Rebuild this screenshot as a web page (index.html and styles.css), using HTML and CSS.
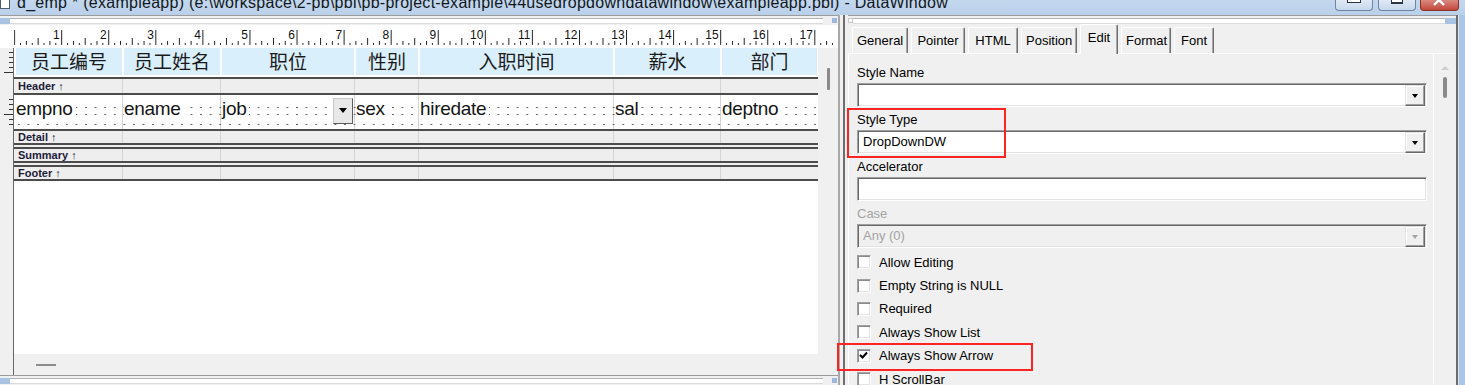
FILE: index.html
```html
<!DOCTYPE html>
<html>
  <head>
    <meta charset="utf-8">
    <link rel="stylesheet" href="styles.css">
  </head>
  <body>
    <div class="window">
      <div class="titlebar">
        <span class="app-icon"></span>
        <span class="title">d_emp * (exampleapp) (e:\workspace\2-pb\pbl\pb-project-example\44usedropdowndatawindow\exampleapp.pbl) - DataWindow</span>
        <div class="wincontrols">
          <span class="wbtn min"><i></i></span>
          <span class="wbtn max"><i></i></span>
          <span class="wbtn close">
            <svg width="14" height="10" viewBox="0 0 14 10"><path d="M1 -5L11 5M11 -5L1 5" stroke="#fff" stroke-width="2.4" fill="none"/></svg>
          </span>
        </div>
      </div>

      <div class="frame">
        <!-- datawindow painter -->
        <div class="dw-pane">
          <div class="strip"><span class="nub"></span><span class="track"></span><span class="corner"></span></div>

          <svg class="ruler" width="838" height="23" viewBox="0 0 838 23">
            <defs>
              <pattern id="ticks" x="13" y="0" width="47.2" height="23" patternUnits="userSpaceOnUse">
                <rect x="0" y="5" width="1" height="15" fill="#222"/>
                <rect x="23.6" y="13" width="1" height="7" fill="#222"/>
                <rect x="11.8" y="16" width="1" height="4" fill="#222"/>
                <rect x="35.4" y="16" width="1" height="4" fill="#222"/>
                <rect x="5.9" y="18" width="1" height="2" fill="#222"/>
                <rect x="17.7" y="18" width="1" height="2" fill="#222"/>
                <rect x="29.5" y="18" width="1" height="2" fill="#222"/>
                <rect x="41.3" y="18" width="1" height="2" fill="#222"/>
              </pattern>
            </defs>
            <rect x="13" y="0" width="825" height="23" fill="url(#ticks)"/>
            <text x="58.7" y="14">1</text>
            <text x="105.9" y="14">2</text>
            <text x="153.1" y="14">3</text>
            <text x="200.3" y="14">4</text>
            <text x="247.5" y="14">5</text>
            <text x="294.7" y="14">6</text>
            <text x="341.9" y="14">7</text>
            <text x="389.1" y="14">8</text>
            <text x="436.3" y="14">9</text>
            <text x="483.5" y="14">10</text>
            <text x="530.7" y="14">11</text>
            <text x="577.9" y="14">12</text>
            <text x="625.1" y="14">13</text>
            <text x="672.3" y="14">14</text>
            <text x="719.5" y="14">15</text>
            <text x="766.7" y="14">16</text>
            <text x="813.9" y="14">17</text>
          </svg>

          <div class="design">
            <div class="vruler"></div>
            <div class="canvas">
              <div class="bands">
                <div class="band-head">
                  <div class="cols labels">
                    <span>员工编号</span>
                    <span>员工姓名</span>
                    <span>职位</span>
                    <span>性别</span>
                    <span>入职时间</span>
                    <span>薪水</span>
                    <span>部门</span>
                  </div>
                </div>
                <div class="bar bar-head">Header ↑</div>
                <div class="cols fields">
                  <span class="fld"><span class="txt">empno</span></span>
                  <span class="fld"><span class="txt">ename</span></span>
                  <span class="fld"><span class="txt">job</span><span class="ddbtn"></span></span>
                  <span class="fld"><span class="txt">sex</span></span>
                  <span class="fld"><span class="txt">hiredate</span></span>
                  <span class="fld"><span class="txt">sal</span></span>
                  <span class="fld"><span class="txt">deptno</span></span>
                </div>
                <div class="bar-stack">
                  <div class="bar">Detail ↑</div>
                  <div class="bar">Summary ↑</div>
                  <div class="bar">Footer ↑</div>
                </div>
              </div>
              <div class="foot"><span class="dash"></span></div>
            </div>
            <div class="vscroll"><span class="thumb"></span></div>
          </div>

          <div class="strip"><span class="nub"></span><span class="track"></span><span class="corner"></span></div>
        </div>

        <div class="splitter"></div>

        <!-- properties -->
        <div class="prop-pane">
          <div class="strip"><span class="corner light"></span><span class="track"></span><span class="nub wide"></span></div>

          <div class="tabs">
            <span class="tab">General</span>
            <span class="tab">Pointer</span>
            <span class="tab">HTML</span>
            <span class="tab">Position</span>
            <span class="tab active">Edit</span>
            <span class="tab">Format</span>
            <span class="tab">Font</span>
          </div>

          <div class="page">
            <div class="page-body">
              <div class="group">
                <div class="flabel">Style Name</div>
                <div class="combo"><span class="val"></span><span class="drop"></span></div>
              </div>
              <div class="group">
                <div class="flabel">Style Type</div>
                <div class="combo"><span class="val">DropDownDW</span><span class="drop"></span></div>
              </div>
              <div class="group">
                <div class="flabel">Accelerator</div>
                <div class="combo"><span class="val"></span></div>
              </div>
              <div class="group disabled">
                <div class="flabel">Case</div>
                <div class="combo"><span class="val">Any (0)</span><span class="drop"></span></div>
              </div>

              <div class="checks">
                <div class="check"><span class="box"></span>Allow Editing</div>
                <div class="check"><span class="box"></span>Empty String is NULL</div>
                <div class="check"><span class="box"></span>Required</div>
                <div class="check"><span class="box"></span>Always Show List</div>
                <div class="check"><span class="box"><svg width="11" height="11" viewBox="0 0 11 11"><path d="M2 5l2.5 2.5L9 2.5" stroke="#000" stroke-width="2" fill="none"/></svg></span>Always Show Arrow</div>
                <div class="check"><span class="box"></span>H ScrollBar</div>
              </div>
            </div>
            <div class="pscroll"><span class="up"></span><span class="thumb"></span></div>
          </div>
        </div>

        <div class="edge"></div>
      </div>

      <div class="mark mark-type"></div>
      <div class="mark mark-arrow"></div>
    </div>
  </body>
</html>
```

FILE: styles.css
```css
* {
  box-sizing: border-box;
}

body {
  margin: 0;
  background: #f0f0f0;
  color: #000;
  font-family: "Liberation Sans", Arial, sans-serif;
  font-size: 13px;
}

.window {
  position: relative;
  width: 1465px;
  height: 385px;
  overflow: hidden;
}

/* title bar */
.titlebar {
  height: 15px;
  display: flex;
  overflow: hidden;
  background: linear-gradient(#c3d7ee, #bad0ea);
}

.app-icon {
  width: 10px;
  height: 9px;
  margin: 0 7px 0 0;
  background: #fff;
  border: 1px solid #4f5d70;
  border-top: none;
}

.title {
  font-size: 16px;
  line-height: 16px;
  margin-top: -5px;
  letter-spacing: 0.27px;
  white-space: nowrap;
  color: #111820;
}

.wincontrols {
  margin-left: auto;
  margin-right: 6px;
  display: flex;
  gap: 4px;
}

.wbtn {
  width: 38px;
  height: 11px;
  display: flex;
  justify-content: center;
  border: 1px solid #6c84a5;
  border-top: none;
  border-radius: 0 0 4px 4px;
  background: linear-gradient(#dfe9f5, #c7d8ec);
  overflow: hidden;
}

.wbtn.min {
  margin-right: 1px;
}

.wbtn i {
  display: block;
  background: #fff;
  border: 1px solid #2c3440;
}

.wbtn.min i {
  width: 14px;
  height: 4px;
  margin-top: -1px;
}

.wbtn.max i {
  width: 12px;
  height: 5px;
  margin-top: -1px;
  border-width: 0 1px 2px;
}

.wbtn.close {
  width: 39px;
  border-color: #8b3128;
  background: linear-gradient(#d98a80, #c5473b);
}

/* layout */
.frame {
  display: flex;
  height: 370px;
}

.dw-pane {
  width: 838px;
  display: flex;
  flex-direction: column;
}

.strip {
  height: 10px;
  display: flex;
  align-items: flex-start;
  padding-top: 2px;
  border-top: 1px solid #9c9c9c;
}

.strip .nub {
  width: 10px;
  height: 6px;
  background: #a9c3e2;
}

.strip .nub.wide {
  width: 11px;
}

.strip .track {
  flex: 1;
  height: 6px;
  background: #fff;
  border-top: 1px solid #b4b4b4;
  border-bottom: 1px solid #dadada;
}

.strip .corner {
  width: 5px;
  height: 5px;
  margin: 0 1px 0 9px;
  background: #9db8da;
}

.strip .corner.light {
  margin: 0;
  background: #fafafa;
  border: 1px solid #c8c8c8;
}

.ruler {
  display: block;
  background: #fff;
}

.ruler text {
  font-family: "Liberation Sans", Arial, sans-serif;
  font-size: 12px;
  text-anchor: end;
  fill: #111;
}

.design {
  display: flex;
  height: 328px;
}

.vruler {
  width: 14px;
  border-right: 1px solid #666;
  background:
    repeating-linear-gradient(#333 0 1px, transparent 1px 5px) 9px 4px / 4px 24px no-repeat,
    linear-gradient(#333, #333) 4px 24px / 9px 1px no-repeat,
    repeating-linear-gradient(#333 0 1px, transparent 1px 5px) 9px 51px / 4px 30px no-repeat,
    linear-gradient(#333, #333) 4px 66px / 9px 1px no-repeat,
    #f0f0f0;
}

.canvas {
  width: 804px;
  display: flex;
  flex-direction: column;
}

.bands {
  --collines:
    linear-gradient(#d4d4d4, #d4d4d4) 108px 0 / 1px 100% no-repeat,
    linear-gradient(#d4d4d4, #d4d4d4) 206px 0 / 1px 100% no-repeat,
    linear-gradient(#d4d4d4, #d4d4d4) 340px 0 / 1px 100% no-repeat,
    linear-gradient(#d4d4d4, #d4d4d4) 404px 0 / 1px 100% no-repeat,
    linear-gradient(#d4d4d4, #d4d4d4) 599px 0 / 1px 100% no-repeat,
    linear-gradient(#d4d4d4, #d4d4d4) 706px 0 / 1px 100% no-repeat;
  flex: 1;
  background: #fff;
}

.cols {
  display: grid;
  grid-template-columns: 106px 96px 132px 62px 193px 105px 95px;
  column-gap: 2px;
  padding-left: 2px;
}

.band-head {
  height: 29px;
}

.labels {
  height: 27px;
}

.labels span {
  background: #daeffc;
  text-align: center;
  font-family: "Noto Sans CJK SC", sans-serif;
  font-size: 19px;
  line-height: 26px;
  color: #1a1a1a;
}

.fields {
  height: 34px;
  background:
    radial-gradient(circle, #666 0 0.6px, transparent 1px) 0 11.5px / 9.6px 3px repeat-x,
    radial-gradient(circle, #666 0 0.6px, transparent 1px) 0 18.5px / 9.6px 3px repeat-x,
    radial-gradient(circle, #666 0 0.6px, transparent 1px) 0 28.5px / 9.6px 3px repeat-x,
    var(--collines),
    #fff;
}

.fld {
  display: flex;
  align-items: flex-start;
  font-size: 19px;
  line-height: 28px;
  letter-spacing: -0.3px;
  color: #151515;
}

.fld .txt {
  background: #fff;
  padding-right: 3px;
}

.ddbtn {
  width: 20px;
  height: 26px;
  margin: 3px 1px 0 auto;
  display: flex;
  align-items: center;
  justify-content: center;
  background: #e8e8e8;
  border: 1px solid;
  border-color: #c8c8c8 #5e5e5e #5e5e5e #c8c8c8;
}

.ddbtn::after {
  content: "";
  border-left: 4.5px solid transparent;
  border-right: 4.5px solid transparent;
  border-top: 5px solid #000;
}

.bar {
  height: 16px;
  padding-left: 4px;
  border-top: 2px solid #4c4c4c;
  border-bottom: 2px solid #4c4c4c;
  font-size: 11px;
  font-weight: bold;
  line-height: 12px;
  color: #1c1c38;
  background: var(--collines), #eeeeee;
}

.bar-head {
  height: 18px;
  line-height: 14px;
}

.bar-stack {
  display: flex;
  flex-direction: column;
  gap: 2px;
  background: #eeeeee;
}

.foot {
  height: 21px;
  padding: 10px 0 0 22px;
  background: #f0f0f0;
}

.dash {
  display: block;
  width: 20px;
  height: 2px;
  background: #8c8c8c;
}

.vscroll {
  width: 20px;
  padding: 20px 0 0 9px;
}

.vscroll .thumb {
  display: block;
  width: 3px;
  height: 22px;
  border-radius: 1px;
  background: #8a8a8a;
}

.splitter {
  width: 7px;
  margin-right: 3px;
  border-left: 2px solid #a9a9a9;
  border-right: 2px solid #6e6e6e;
}

/* property sheet */
.prop-pane {
  width: 610px;
  display: flex;
  flex-direction: column;
  border-right: 2px solid #6b6b6b;
}

.tabs {
  height: 29px;
  display: flex;
  align-items: flex-end;
  padding-left: 4px;
}

.tab {
  height: 26px;
  margin-right: 3px;
  padding: 0 4px;
  line-height: 25px;
  text-align: center;
  white-space: nowrap;
  border: 1px solid #fff;
  border-right-color: #6f6f6f;
  border-bottom: none;
  border-radius: 2px 2px 0 0;
  box-shadow: inset -1px 0 0 #a8a8a8;
}

.tab:nth-child(1) { width: 56px; }
.tab:nth-child(2) { width: 54px; }
.tab:nth-child(3) { width: 50px; }
.tab:nth-child(4) { width: 56px; }
.tab:nth-child(6) { width: 50px; }
.tab:nth-child(7) { width: 40px; }

.tab.active {
  position: relative;
  width: 38px;
  height: 30px;
  margin-bottom: -1px;
  line-height: 26px;
  background: #f0f0f0;
}

.page {
  flex: 1;
  display: flex;
  border-top: 1px solid #fff;
  border-left: 1px solid #fff;
}

.page-body {
  flex: 1;
  padding: 11px 6px 0 8px;
  border-right: 1px solid #fff;
}

.group {
  margin-bottom: 5px;
}

.flabel {
  line-height: 16px;
  margin-bottom: 2px;
}

.combo {
  height: 24px;
  display: flex;
  align-items: flex-start;
  padding: 1px 1px 0 1px;
  background: #fff;
  border: 1px solid;
  border-color: #a0a0a0 #fff #fff #a0a0a0;
  box-shadow: inset 1px 1px 0 #696969, inset -1px -1px 0 #e3e3e3;
}

.combo .val {
  flex: 1;
  padding-left: 4px;
  line-height: 20px;
}

.combo .drop {
  width: 20px;
  height: 21px;
  display: flex;
  align-items: center;
  justify-content: center;
  background: #f0f0f0;
  border: 1px solid;
  border-color: #e3e3e3 #696969 #696969 #e3e3e3;
  box-shadow: inset -1px -1px 0 #a0a0a0, inset 1px 1px 0 #fff;
}

.combo .drop::after {
  content: "";
  border-left: 3.5px solid transparent;
  border-right: 3.5px solid transparent;
  border-top: 4px solid #000;
}

.disabled .flabel,
.disabled .val {
  color: #a3a3a3;
}

.disabled .combo {
  background: #f0f0f0;
}

.disabled .drop::after {
  border-top-color: #a3a3a3;
}

.checks {
  margin-top: -2.5px;
}

.check {
  height: 23.4px;
  display: flex;
  align-items: center;
}

.box {
  width: 14px;
  height: 14px;
  margin-right: 8px;
  padding: 1px;
  background: #fff;
  border: 1px solid;
  border-color: #a0a0a0 #fff #fff #a0a0a0;
  box-shadow: inset 1px 1px 0 #8a8a8a, inset -1px -1px 0 #e3e3e3;
}

.box svg {
  display: block;
  margin: -1px 0 0 -1px;
}

.pscroll {
  width: 22px;
  padding: 12px 0 0 7px;
}

.pscroll .up {
  display: block;
  width: 0;
  border-left: 4px solid transparent;
  border-right: 4px solid transparent;
  border-bottom: 4px solid #cdcdcd;
}

.pscroll .thumb {
  display: block;
  width: 4px;
  height: 21px;
  margin: 7px 0 0 2px;
  border-radius: 2px;
  background: #8a8a8a;
}

.edge {
  flex: 1;
  border-left: 1px solid #d9e6f4;
  background: #abc5e4;
}

/* red annotation boxes */
.mark {
  position: absolute;
  border: 2px solid #ff2424;
}

.mark-type {
  left: 847px;
  top: 108px;
  width: 159px;
  height: 50px;
}

.mark-arrow {
  left: 837px;
  top: 343px;
  width: 196px;
  height: 28px;
}
```
